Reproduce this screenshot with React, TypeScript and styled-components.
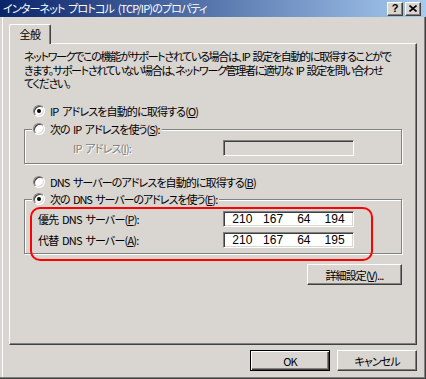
import React from "react";
import styled, { createGlobalStyle } from "styled-components";

const FACE = "#d9d5d1";

const Global = createGlobalStyle`
  html, body { margin: 0; padding: 0; background: ${FACE}; }
  body {
    font-family: "Noto Sans CJK JP", "Noto Sans", sans-serif;
    font-size: 11px;
    font-feature-settings: "palt" 1;
    color: #000;
  }
  * { box-sizing: border-box; }
`;

const Window = styled.div`
  position: relative;
  width: 426px;
  height: 379px;
  background: ${FACE};
  display: flex;
  flex-direction: column;
  box-shadow: inset -1px -1px #404040, inset -2px -2px #808080, inset 2px 0 ${FACE}, inset 3px 0 #fff;
  overflow: hidden;
  letter-spacing: -0.8px;
  word-spacing: 2px;
`;

const TitleBar = styled.div`
  height: 17px;
  flex: none;
  display: flex;
  align-items: center;
  padding: 0 5px 0 3px;
  background: linear-gradient(to right, #0a246a, #a6caf0);
  color: #fff;
`;

const TitleText = styled.div`
  flex: 1;
  line-height: 17px;
  white-space: nowrap;
  letter-spacing: -0.85px;
`;

const CapButton = styled.div<{ $gap?: number }>`
  width: 16px;
  height: 14px;
  margin-left: ${(p) => p.$gap ?? 0}px;
  background: ${FACE};
  border: 1px solid;
  border-color: #fff #404040 #404040 #fff;
  box-shadow: inset -1px -1px #808080;
  display: flex;
  align-items: center;
  justify-content: center;
  color: #000;
  font-family: "Liberation Sans", sans-serif;
  font-weight: bold;
  font-size: 11px;
  letter-spacing: 0;
  line-height: 1;
`;

const Body = styled.div`
  flex: 1;
  display: flex;
  flex-direction: column;
  padding: 7px 9px 0 9px;
`;

const TabRow = styled.div`
  display: flex;
  height: 19px;
  position: relative;
  z-index: 1;
`;

const Tab = styled.div`
  width: 42px;
  height: 20px;
  background: ${FACE};
  border-top: 1px solid #fff;
  border-left: 1px solid #fff;
  border-right: 1px solid #404040;
  box-shadow: inset -1px 0 #808080;
  border-top-left-radius: 2px;
  border-top-right-radius: 2px;
  display: flex;
  align-items: center;
  justify-content: center;
  padding-bottom: 1px;
  letter-spacing: -0.5px;
`;

const Panel = styled.div`
  height: 302px;
  border-top: 1px solid #fff;
  border-left: 1px solid #fff;
  border-right: 1px solid #404040;
  border-bottom: 1px solid #404040;
  box-shadow: inset -1px -1px #808080;
  display: flex;
  flex-direction: column;
  padding: 6px 14px 0 14px;
`;

const Para = styled.div`
  line-height: 13.5px;
  white-space: nowrap;
  letter-spacing: -1.32px;
`;

const RadioRow = styled.div<{ $mt: number; $ls: number }>`
  display: flex;
  align-items: center;
  height: 14px;
  margin-top: ${(p) => p.$mt}px;
  padding-left: 9px;
  gap: 5px;
  white-space: nowrap;
  letter-spacing: ${(p) => p.$ls}px;
`;

const Radio = styled.span<{ $checked?: boolean }>`
  position: relative;
  flex: none;
  width: 12px;
  height: 12px;
  border-radius: 50%;
  background: #fff;
  border: 1px solid;
  border-color: #808080 #fff #fff #808080;
  box-shadow: inset 1px 1px #404040, inset -1px -1px ${FACE};
  &::after {
    content: "";
    display: ${(p) => (p.$checked ? "block" : "none")};
    position: absolute;
    left: 3px;
    top: 3px;
    width: 4px;
    height: 4px;
    border-radius: 50%;
    background: #000;
  }
`;

const Group = styled.fieldset<{ $mt: number; $pt: number; $pb: number; $gap: number }>`
  margin: ${(p) => p.$mt}px 0 0 0;
  padding: ${(p) => p.$pt}px 0 ${(p) => p.$pb}px 0;
  border: 1px solid #808080;
  box-shadow: inset 1px 1px #fff, 1px 1px #fff;
  display: flex;
  flex-direction: column;
  gap: ${(p) => p.$gap}px;
  min-width: 0;
`;

const Legend = styled.legend<{ $ls: number }>`
  margin-left: 7px;
  padding: 0 2px 0 1px;
  display: flex;
  align-items: center;
  gap: 5px;
  height: 14px;
  white-space: nowrap;
  letter-spacing: ${(p) => p.$ls}px;
  background: ${FACE};
`;

const FieldRow = styled.div<{ $indent: number; $labelW: number }>`
  display: flex;
  align-items: center;
  padding-left: ${(p) => p.$indent}px;
  & > label {
    width: ${(p) => p.$labelW}px;
    white-space: nowrap;
  }
`;

const FieldLabel = styled.label<{ $disabled?: boolean }>`
  color: ${(p) => (p.$disabled ? "#808080" : "#000")};
  text-shadow: ${(p) => (p.$disabled ? "1px 1px #fff" : "none")};
`;

const IpBox = styled.div<{ $disabled?: boolean }>`
  width: 131px;
  height: 16px;
  background: ${(p) => (p.$disabled ? FACE : "#fff")};
  border: 1px solid;
  border-color: #808080 #fff #fff #808080;
  box-shadow: inset 1px 1px #404040, inset -1px -1px ${FACE};
  display: grid;
  grid-template-columns: repeat(4, 1fr);
  align-items: center;
  padding: 0 3px;
  font-family: "Liberation Sans", sans-serif;
  font-size: 12px;
  letter-spacing: 0;
`;

const Octet = styled.span`
  text-align: center;
  line-height: 14px;
`;

const BtnRow = styled.div<{ $mt: number }>`
  display: flex;
  justify-content: flex-end;
  gap: 7px;
  margin-top: ${(p) => p.$mt}px;
`;

const Button = styled.div<{ $w: number; $default?: boolean }>`
  width: ${(p) => p.$w}px;
  height: 21px;
  background: ${FACE};
  border: 1px solid;
  border-color: ${(p) => (p.$default ? "#000" : "#fff #404040 #404040 #fff")};
  box-shadow: ${(p) =>
    p.$default
      ? "inset 1px 1px #fff, inset -1px -1px #404040, inset -2px -2px #808080"
      : "inset -1px -1px #808080"};
  display: flex;
  align-items: center;
  justify-content: center;
  white-space: nowrap;
  letter-spacing: -0.9px;
`;

const Annotation = styled.div`
  position: absolute;
  left: 30px;
  top: 207px;
  width: 343px;
  height: 54px;
  border: 2px solid #ff0000;
  border-radius: 10px;
  pointer-events: none;
`;

const Octets = ({ v, disabled }: { v?: string[]; disabled?: boolean }) => (
  <IpBox $disabled={disabled}>
    {(v ?? ["", "", "", ""]).map((o, i) => (
      <Octet key={i}>{o}</Octet>
    ))}
  </IpBox>
);

export default function App() {
  return (
    <>
      <Global />
      <Window>
        <TitleBar>
          <TitleText>インターネット プロトコル (TCP/IP)のプロパティ</TitleText>
          <CapButton>?</CapButton>
          <CapButton $gap={2}>
            <svg width="8" height="7" viewBox="0 0 8 7">
              <path d="M0.5 0.5 L7.5 6.5 M7.5 0.5 L0.5 6.5" stroke="#000" strokeWidth="1.6" />
            </svg>
          </CapButton>
        </TitleBar>
        <Body>
          <TabRow>
            <Tab>全般</Tab>
          </TabRow>
          <Panel>
            <Para>
              ネットワークでこの機能がサポートされている場合は、IP 設定を自動的に取得することがで
              <br />
              きます。サポートされていない場合は、ネットワーク管理者に適切な IP 設定を問い合わせ
              <br />
              てください。
            </Para>
            <RadioRow $mt={13.5} $ls={-0.85}>
              <Radio $checked />
              <span>
                IP アドレスを自動的に取得する(<u>O</u>)
              </span>
            </RadioRow>
            <Group $mt={4} $pt={4} $pb={7} $gap={0}>
              <Legend $ls={-1}>
                <Radio />
                <span>
                  次の IP アドレスを使う(<u>S</u>):
                </span>
              </Legend>
              <FieldRow $indent={48} $labelW={150}>
                <FieldLabel $disabled>
                  IP アドレス(<u>I</u>):
                </FieldLabel>
                <Octets disabled />
              </FieldRow>
            </Group>
            <RadioRow $mt={11} $ls={-0.9}>
              <Radio />
              <span>
                DNS サーバーのアドレスを自動的に取得する(<u>B</u>)
              </span>
            </RadioRow>
            <Group $mt={3} $pt={5} $pb={5} $gap={5}>
              <Legend $ls={-1.05}>
                <Radio $checked />
                <span>
                  次の DNS サーバーのアドレスを使う(<u>E</u>):
                </span>
              </Legend>
              <FieldRow $indent={13} $labelW={185}>
                <FieldLabel>
                  優先 DNS サーバー(<u>P</u>):
                </FieldLabel>
                <Octets v={["210", "167", "64", "194"]} />
              </FieldRow>
              <FieldRow $indent={13} $labelW={185}>
                <FieldLabel>
                  代替 DNS サーバー(<u>A</u>):
                </FieldLabel>
                <Octets v={["210", "167", "64", "195"]} />
              </FieldRow>
            </Group>
            <BtnRow $mt={10}>
              <Button $w={95}>
                詳細設定(<u>V</u>)...
              </Button>
            </BtnRow>
          </Panel>
          <BtnRow $mt={5}>
            <Button $w={80} $default>
              OK
            </Button>
            <Button $w={80}>キャンセル</Button>
          </BtnRow>
        </Body>
        <Annotation />
      </Window>
    </>
  );
}
